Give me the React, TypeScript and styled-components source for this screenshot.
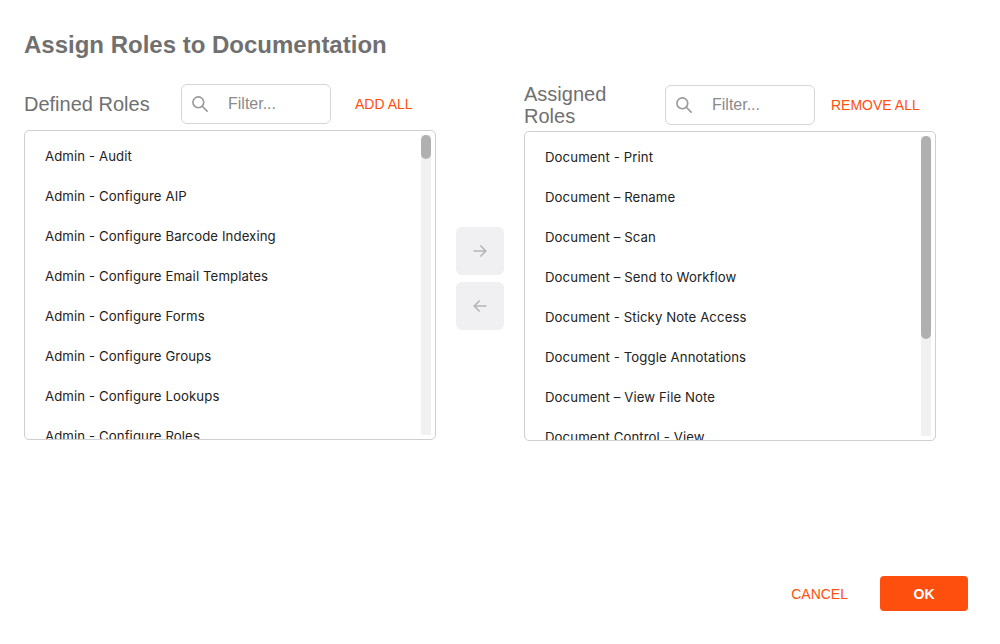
import React from "react";
import styled, { createGlobalStyle } from "styled-components";

const Global = createGlobalStyle`
  html, body { margin: 0; padding: 0; background: #fff; }
  body { font-family: Inter, "Liberation Sans", sans-serif; }
`;

const ORANGE = "#ff4f0f";

const Dialog = styled.div`
  width: 1000px; height: 644px; box-sizing: border-box;
  padding: 31px 24px 32px 24px; display: flex; flex-direction: column;
`;
const Title = styled.h1`
  margin: 0; font: bold 24px "Liberation Sans", Arial, sans-serif; color: #707070;
  height: 28px; line-height: 28px;
`;
const Columns = styled.div`
  display: flex; margin-top: 23px; align-items: flex-start;
`;
const Panel = styled.div`
  width: 412px; display: flex; flex-direction: column;
`;
const Header = styled.div<{ $mt?: number }>`
  height: 44px; display: flex; align-items: center; margin-bottom: 4px; margin-top: ${p => p.$mt ?? 0}px;
`;
const PanelTitle = styled.div<{ $w: number }>`
  width: ${p => p.$w}px; font: 20px "Liberation Sans", Arial, sans-serif; color: #707070; line-height: 22px;
`;
const Filter = styled.div`
  width: 150px; height: 40px; box-sizing: border-box; border: 1px solid #d6d6d6; border-radius: 6px;
  display: flex; align-items: center; padding-left: 8px; gap: 18px;
  font: 16px "Liberation Sans", Arial, sans-serif; color: #8a8a8a;
`;
const LinkBtn = styled.div<{ $ml: number }>`
  margin-left: ${p => p.$ml}px; color: ${ORANGE}; font: 14px "Liberation Sans", Arial, sans-serif;
`;
const List = styled.div`
  position: relative; height: 310px; box-sizing: border-box; border: 1px solid #cfcfcf; border-radius: 5px;
  overflow: hidden; padding-top: 5px;
`;
const Row = styled.div`
  height: 40px; line-height: 40px; padding-left: 20px; font-size: 13.2px; color: #222; letter-spacing: 0.1px;
`;
const Track = styled.div`
  position: absolute; right: 4px; top: 4px; bottom: 4px; width: 10px; background: #f1f1f1;
`;
const Thumb = styled.div<{ $h: number }>`
  width: 10px; height: ${p => p.$h}px; background: #b0b0b0; border-radius: 5px;
`;
const Mid = styled.div`
  width: 88px; display: flex; flex-direction: column; align-items: center; gap: 7px; padding-top: 145px;
`;
const ArrowBtn = styled.div`
  width: 48px; height: 48px; border-radius: 6px; background: #f0f0f2; display: flex; align-items: center; justify-content: center;
`;
const Footer = styled.div`
  margin-top: auto; display: flex; justify-content: flex-end; align-items: center; gap: 32px; padding-right: 8px; padding-bottom: 1px;
`;
const Cancel = styled.div`
  color: ${ORANGE}; font: 14px "Liberation Sans", Arial, sans-serif;
`;
const Ok = styled.div`
  width: 88px; height: 35px; background: ${ORANGE}; color: #fff; border-radius: 4px;
  display: flex; align-items: center; justify-content: center; font: bold 14px "Liberation Sans", Arial, sans-serif;
`;

const Search = () => (
  <svg width="20" height="20" viewBox="0 0 24 24" fill="none" stroke="#9a9a9a" strokeWidth="2" strokeLinecap="round">
    <circle cx="10" cy="10" r="6.5" /><path d="M15 15l5.5 5.5" />
  </svg>
);
const Arrow = ({ left }: { left?: boolean }) => (
  <svg width="20" height="20" viewBox="0 0 24 24" fill="none" stroke="#b5b5b5" strokeWidth="2" strokeLinecap="round" strokeLinejoin="round" style={left ? { transform: "scaleX(-1)" } : undefined}>
    <path d="M5 12h14M13 6l6 6-6 6" />
  </svg>
);

const left = ["Admin - Audit", "Admin - Configure AIP", "Admin - Configure Barcode Indexing", "Admin - Configure Email Templates", "Admin - Configure Forms", "Admin - Configure Groups", "Admin - Configure Lookups", "Admin - Configure Roles"];
const right = ["Document - Print", "Document \u2013 Rename", "Document \u2013 Scan", "Document \u2013 Send to Workflow", "Document - Sticky Note Access", "Document - Toggle Annotations", "Document \u2013 View File Note", "Document Control - View"];

export default function App() {
  return (
    <>
      <Global />
      <Dialog>
        <Title>Assign Roles to Documentation</Title>
        <Columns>
          <Panel>
            <Header>
              <PanelTitle $w={157}>Defined Roles</PanelTitle>
              <Filter><Search />Filter...</Filter>
              <LinkBtn $ml={24}>ADD ALL</LinkBtn>
            </Header>
            <List>
              {left.map(t => <Row key={t}>{t}</Row>)}
              <Track><Thumb $h={24} /></Track>
            </List>
          </Panel>
          <Mid>
            <ArrowBtn><Arrow /></ArrowBtn>
            <ArrowBtn><Arrow left /></ArrowBtn>
          </Mid>
          <Panel>
            <Header $mt={1}>
              <PanelTitle $w={141} style={{ paddingRight: 50, boxSizing: "border-box" }}>Assigned Roles</PanelTitle>
              <Filter><Search />Filter...</Filter>
              <LinkBtn $ml={16}>REMOVE ALL</LinkBtn>
            </Header>
            <List>
              {right.map(t => <Row key={t}>{t}</Row>)}
              <Track><Thumb $h={203} /></Track>
            </List>
          </Panel>
        </Columns>
        <Footer>
          <Cancel>CANCEL</Cancel>
          <Ok>OK</Ok>
        </Footer>
      </Dialog>
    </>
  );
}
